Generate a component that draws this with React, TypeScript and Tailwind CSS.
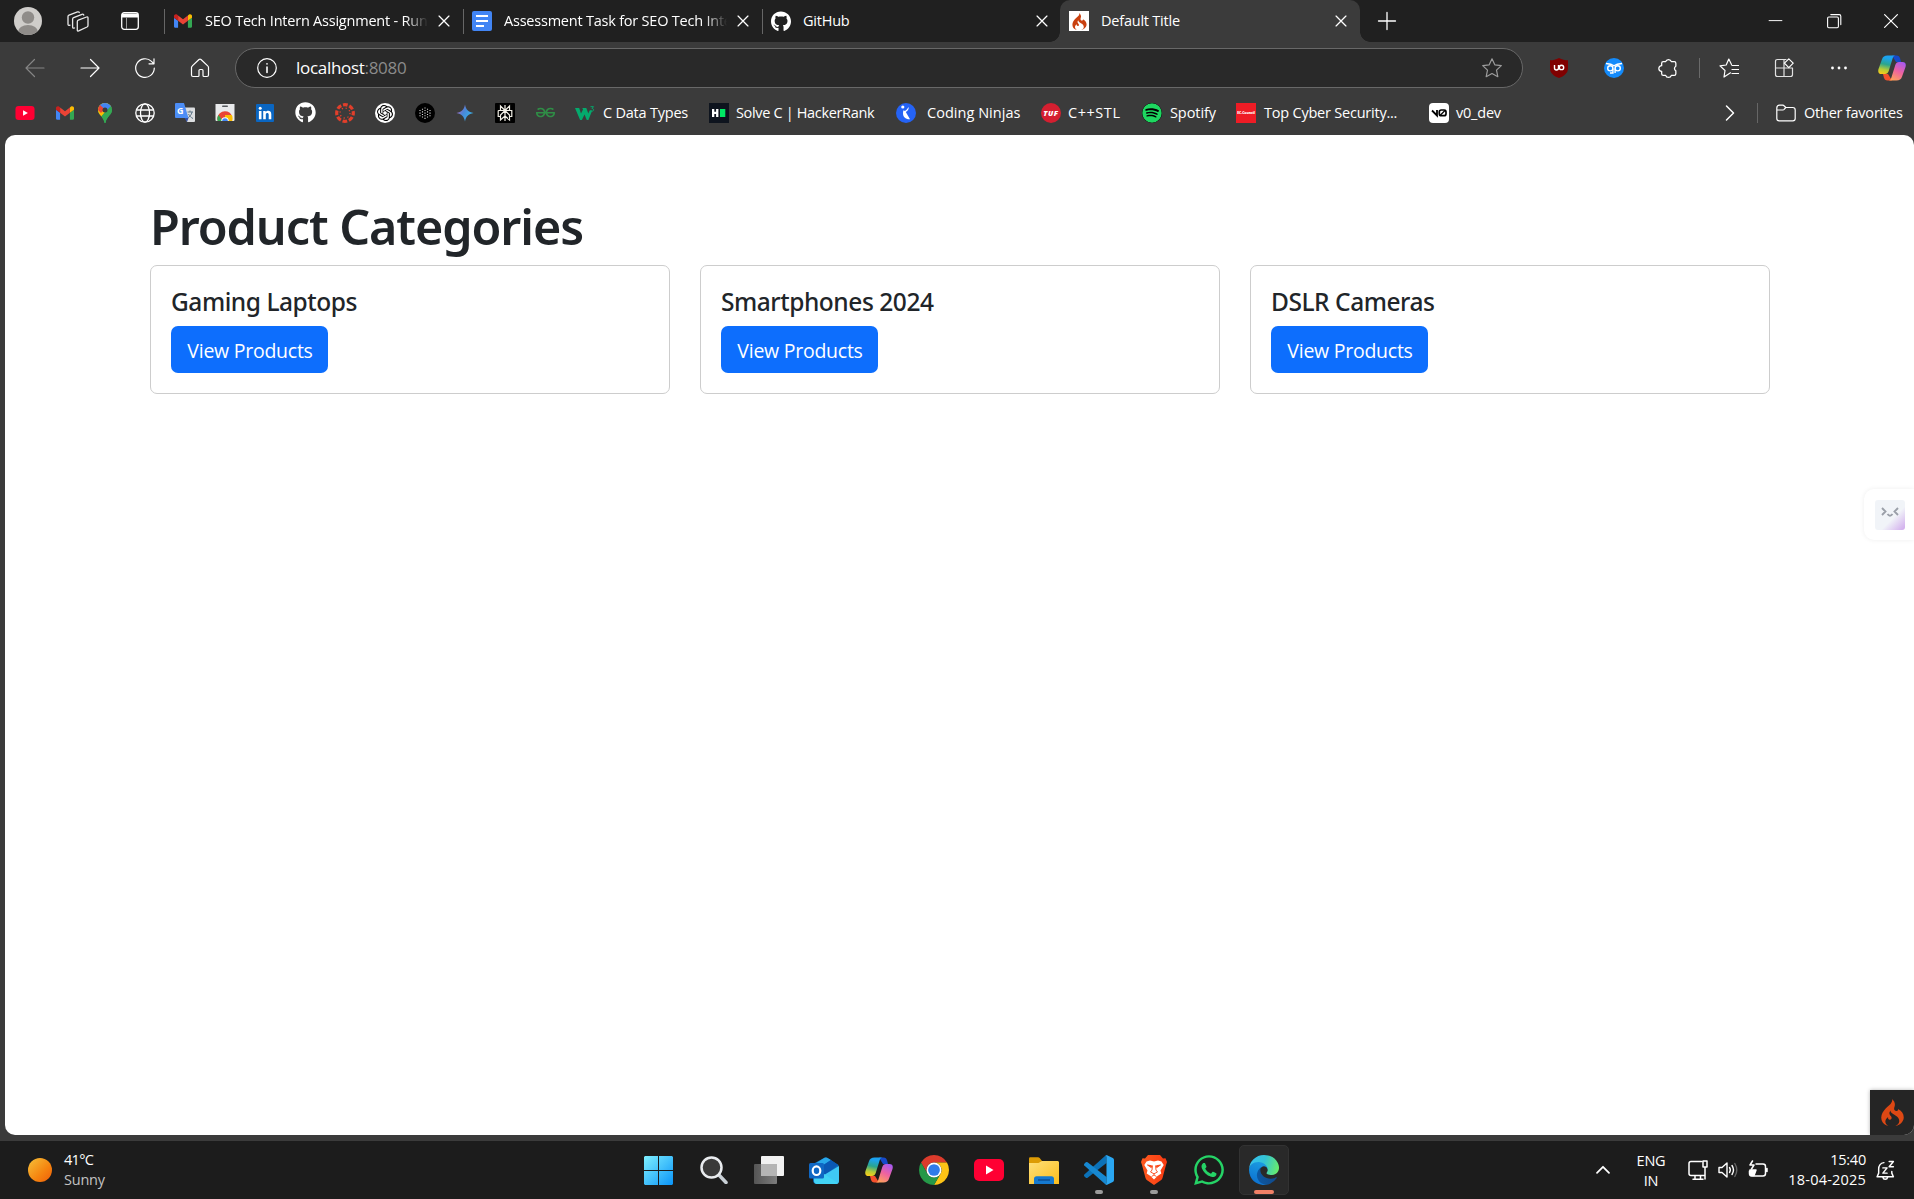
import React from 'react';
import { FaGithub, FaSpotify, FaWhatsapp } from 'react-icons/fa';
import { SiCodeigniter, SiGeeksforgeeks, SiOpenai } from 'react-icons/si';

type Kids = { children?: React.ReactNode };

/* ---------- brand icons ---------- */

const Gmail = () => (
  <svg viewBox="52 42 88 66" className="h-[14px] w-[18px]">
    <path fill="#4285f4" d="M58 108h14V74L52 59v43c0 3.32 2.69 6 6 6" />
    <path fill="#34a853" d="M120 108h14c3.32 0 6-2.69 6-6V59l-20 15" />
    <path fill="#fbbc04" d="M120 48v26l20-15v-8c0-7.42-8.47-11.65-14.4-7.2" />
    <path fill="#ea4335" d="M72 74V48l24 18 24-18v26L96 92" />
    <path fill="#c5221f" d="M52 51v8l20 15V48l-5.6-4.2c-5.94-4.45-14.4-.22-14.4 7.2" />
  </svg>
);

const YouTube = ({ className }: { className: string }) => (
  <svg viewBox="0 0 30 22" className={className}>
    <rect width="30" height="22" rx="5" fill="#ff0033" />
    <path d="M12 6.5v9l7.5-4.5z" fill="#fff" />
  </svg>
);

const Docs = () => (
  <svg viewBox="0 0 20 20" className="size-5">
    <rect width="20" height="20" rx="2" fill="#4285f4" />
    <path d="M4 5h12M4 10h12M4 15h8" stroke="#fff" strokeWidth="2.2" />
  </svg>
);

const MapsPin = () => (
  <svg viewBox="0 0 14 20" className="h-5 w-[14px]">
    <clipPath id="pin">
      <path d="M7 0a7 7 0 0 1 7 7c0 5-5.5 6.500-6.300 12.300a.7.7 0 0 1-1.400 0C5.500 13.500 0 12 0 7a7 7 0 0 1 7-7z" />
    </clipPath>
    <g clipPath="url(#pin)">
      <rect width="14" height="20" fill="#34a853" />
      <path d="M0 0h14v4L7 9 2 15l-2-2z" fill="#fbbc04" />
      <path d="M0 0h14v3L8 9 3 8z" fill="#4285f4" />
      <path d="M0 1.500 2 2l4.500 4L3 10 0 7z" fill="#ea4335" />
      <path d="M11 5 14 2v18H6.500L3 14z" fill="#34a853" />
    </g>
    <circle cx="7" cy="7" r="2.500" fill="#3b3b3b" />
  </svg>
);

const Globe = () => (
  <svg viewBox="0 0 20 20" className="size-5" fill="none" stroke="#fff" strokeWidth="1.300">
    <circle cx="10" cy="10" r="9.200" />
    <ellipse cx="10" cy="10" rx="4.500" ry="9.200" />
    <path d="M1.500 7h17M1.500 13h17" />
  </svg>
);

const Translate = () => (
  <svg viewBox="0 0 20 20" className="size-5">
    <path d="M8 4.500h11a1 1 0 0 1 1 1V18a1 1 0 0 1-1 1h-7z" fill="#dcdee0" />
    <path d="M12.500 9h5.500M15 7.500V9m2 0c-.5 3-2.500 5-4.500 6m1-4c1 2 2.500 3.500 4.500 4.500" stroke="#5f7688" fill="none" />
    <path d="M1 0h8l4.500 15H1a1 1 0 0 1-1-1V1a1 1 0 0 1 1-1z" fill="#4c8df6" />
    <path d="M9.500 15h4L12 19z" fill="#3350a8" />
    <text x="2" y="11" fontSize="9" fontWeight="700" fill="#fff" fontFamily="Open Sans, sans-serif">G</text>
  </svg>
);

const WebStore = () => (
  <svg viewBox="0 0 20 18" className="h-[18px] w-5">
    <path d="M.5 0h19v16a1 1 0 0 1-1 1h-17a1 1 0 0 1-1-1z" fill="#e9eaec" />
    <rect x="7" y="1.500" width="6" height="1.600" rx=".8" fill="#55585c" />
    <path d="M2.500 16.500a7.600 7.600 0 0 1 14-5.500H10v6z" fill="#ea4335" />
    <path d="M10 11h6.800c1 1.700 1 4 .4 6H10z" fill="#fbbc04" />
    <path d="M3.400 11 8 17H2.600c-.6-2-.3-4 .8-6z" fill="#34a853" />
    <path d="M6.200 17a3.800 3.800 0 0 1 7.600 0z" fill="#fff" />
    <path d="M7.200 17a2.800 2.800 0 0 1 5.600 0z" fill="#4285f4" />
  </svg>
);

const LinkedIn = () => (
  <svg viewBox="0 0 18 18" className="size-[18px]">
    <rect width="18" height="18" rx="1" fill="#0a66c2" />
    <circle cx="4.200" cy="4.300" r="1.500" fill="#fff" />
    <path d="M2.900 7h2.600v8.200H2.900zM7.200 7h2.500v1.200c1.300-2.200 5.600-2 5.600 2v5h-2.600v-4.600c0-2-2.900-2-2.900 0v4.600H7.200z" fill="#fff" />
  </svg>
);

const SunRing = () => (
  <svg viewBox="0 0 20 20" className="size-5" fill="none" stroke="#e13f2b">
    <circle cx="10" cy="10" r="8.300" strokeWidth="3.200" strokeDasharray="4.700 1.820" strokeDashoffset="2.300" />
    <circle cx="10" cy="10" r="5" strokeWidth="1.300" strokeDasharray="1.300 2.630" />
  </svg>
);

const DotSphere = () => (
  <svg viewBox="0 0 20 20" className="size-5">
    <circle cx="10" cy="10" r="10" fill="#000" />
    <path
      d="M5 7v6.500M7.500 5.700v9M10 4.400v11.500M12.500 5.700v9M15 7v6.500"
      stroke="#d8d8d8" strokeWidth="1.100" strokeDasharray="1.100 1.500"
    />
  </svg>
);

const Gemini = () => (
  <svg viewBox="0 0 20 20" className="size-5">
    <linearGradient id="gem" x1="0" y1="0" x2="1" y2=".6">
      <stop offset=".2" stopColor="#a06cc0" />
      <stop offset=".5" stopColor="#4a86d8" />
      <stop offset="1" stopColor="#36b5e8" />
    </linearGradient>
    <path d="M10 1.500c.8 5 3.500 7.700 8.500 8.500-5 .8-7.700 3.500-8.500 8.500-.8-5-3.500-7.700-8.500-8.500 5-.8 7.700-3.500 8.500-8.500z" fill="url(#gem)" />
  </svg>
);

const Perplexity = () => (
  <svg viewBox="0 0 20 20" className="size-5">
    <rect width="20" height="20" rx="1" fill="#000" />
    <path
      d="M10 2v16M10 7.500 5.500 3v4.500M10 7.500 14.500 3v4.500M3.200 7.500h13.600v6H14.500V17L10 13M5.500 13.500H3.200v-6M5.500 13.500V17L10 13M10 7.500l-4.500 4.500v1.500M10 7.500l4.500 4.500v1.500"
      fill="none" stroke="#f2efe6" strokeWidth="1.200"
    />
  </svg>
);

const W3 = () => (
  <svg viewBox="0 0 20 14" className="h-[14px] w-5">
    <path d="M0 2h4.200l1.800 5.500L8 3.500 7.300 2h4l2 5.500 1.300-3h2.600L13.400 14h-1.600L9.500 8.500 6.900 14H5.100z" fill="#04aa6d" />
    <path d="M15.500.7h3L17 2.500c2.300 0 2 3-.2 2.600-.6 0-1-.3-1.400-.6" fill="none" stroke="#04aa6d" strokeWidth="1" />
  </svg>
);

const HackerRank = () => (
  <svg viewBox="0 0 20 20" className="size-5">
    <rect width="20" height="20" fill="#0e141e" />
    <path d="M3 6h2.300v2.700h1.800V6h2.300v8H7.100v-3H5.300v3H3z" fill="#fff" />
    <rect x="11" y="6" width="5.300" height="8" fill="#00ea64" />
  </svg>
);

const Ninjas = () => (
  <svg viewBox="0 0 20 20" className="size-5">
    <circle cx="10" cy="10" r="10" fill="#2563f5" />
    <circle cx="6.800" cy="4" r="1.600" fill="#fff" />
    <path d="M12.600 4c.4 2.200-.6 3.600-2.800 5L14 16.300c-4.500.2-7-2.300-7-6 0-1 .1-2 .5-3l1.500.8c1.200-.9 2.400-2.100 3.600-4.100z" fill="#fff" />
  </svg>
);

const Tuf = () => (
  <span className="flex size-5 items-center justify-center rounded-full bg-[#d41f30] text-[7.500px] font-extrabold italic text-white">TUF</span>
);

const EcCouncil = () => (
  <span className="flex size-5 items-center justify-center overflow-hidden bg-[#ee1c25] text-[3.500px] font-extrabold tracking-[-0.1px] text-white">EC-Council</span>
);

const V0 = () => (
  <svg viewBox="0 0 20 20" className="size-5">
    <rect width="20" height="20" rx="4" fill="#fff" />
    <path d="M3 7.500 8 12.500V7" fill="none" stroke="#000" strokeWidth="1.800" />
    <rect x="10.300" y="7" width="6.700" height="5.700" rx="2" fill="none" stroke="#000" strokeWidth="1.700" />
    <path d="m11 12.500 5.500-5.500" stroke="#000" strokeWidth="1.300" />
  </svg>
);

const Ublock = () => (
  <svg viewBox="0 0 20 20" className="size-5">
    <path d="M10 0c3 1.800 6 2.300 9 2.300v8c0 5-4 8-9 9.700-5-1.700-9-4.700-9-9.700v-8C4 2.300 7 1.800 10 0z" fill="#800000" />
    <path d="M5.500 7v3a2 2 0 0 0 4 0V7" fill="none" stroke="#fff" strokeWidth="1.400" />
    <circle cx="12.500" cy="9.400" r="2.200" fill="none" stroke="#fff" strokeWidth="1.400" />
  </svg>
);

const Owl = () => (
  <svg viewBox="0 0 20 20" className="size-5">
    <circle cx="10" cy="10" r="10" fill="#148bfb" />
    <g fill="none" stroke="#fff" strokeWidth="1.400">
      <circle cx="6.300" cy="10.300" r="2.600" />
      <circle cx="13.700" cy="10.300" r="2.600" />
      <path d="M2 5.500c3 .2 6 .8 8 2.300 2-1.500 5-2.100 8-2.300M8.900 10.500V15H6M11.100 10.500V15" />
    </g>
  </svg>
);

const Copilot = ({ id, className }: { id: string; className: string }) => (
  <svg viewBox="0 0 28 26" className={className}>
    <linearGradient id={`${id}l`} x1=".4" y1="0" x2=".2" y2="1">
      <stop offset=".1" stopColor="#1ca3f0" />
      <stop offset=".45" stopColor="#2aa58e" />
      <stop offset=".75" stopColor="#b7cc36" />
      <stop offset="1" stopColor="#fbcb18" />
    </linearGradient>
    <linearGradient id={`${id}r`} x1=".8" y1="0" x2=".3" y2="1">
      <stop offset="0" stopColor="#a659f2" />
      <stop offset=".5" stopColor="#ee62a0" />
      <stop offset="1" stopColor="#fda05c" />
    </linearGradient>
    <path d="M14 .5h4.600c2 0 2.900 1 3.500 3L23 7h-5z" fill="#1649c9" />
    <path d="M14 25.500H9.400c-2 0-2.900-1-3.500-3L5 19h5z" fill="#f4502c" />
    <path d="M9.500.5h8c-1.600 0-2.300 1.200-2.900 3L10.700 16c-.7 2-1.700 3-3.700 3H3.600C.6 19-.3 17 .5 14L4 4.200C4.900 1.700 6.500.5 9.500.5z" fill={`url(#${id}l)`} />
    <path d="M18.500 25.500h-8c1.600 0 2.300-1.200 2.900-3L17.300 10c.7-2 1.700-3 3.700-3h3.400c3 0 3.900 2 3.100 5L24 21.800c-.9 2.500-2.500 3.700-5.500 3.700z" fill={`url(#${id}r)`} />
  </svg>
);

/* ---------- line icons ---------- */

const Line = ({ children, className = 'size-5', w = 1.2 }: Kids & { className?: string; w?: number }) => (
  <svg viewBox="0 0 20 20" className={className} fill="none" stroke="currentColor" strokeWidth={w} strokeLinecap="round" strokeLinejoin="round">
    {children}
  </svg>
);

const Close = () => (
  <Line className="size-[18px] shrink-0" w={1.400}><path d="m4.500 4.500 11 11m0-11-11 11" /></Line>
);

const Star = () => (
  <Line><path d="m10 .8 2.800 6 6.500.8-4.800 4.500 1.300 6.600L10 15.500l-5.800 3.200 1.300-6.600L.7 7.600l6.500-.8z" /></Line>
);

/* ---------- tabs ---------- */

const Tab = ({ icon, title, fade, active }: { icon: React.ReactNode; title: string; fade?: boolean; active?: boolean }) => (
  <div className={active
    ? 'relative -ml-px flex w-[300px] items-center rounded-t-[10px] bg-[#3b3b3b] pl-[9px] pr-[10px]'
    : 'flex w-[299px] items-center pr-[10px]'}>
    {active && (
      <>
        <span className="absolute -left-2.5 bottom-0 size-2.5 bg-[radial-gradient(circle_at_0_0,transparent_9.500px,#3b3b3b_10px)]" />
        <span className="absolute -right-2.5 bottom-0 size-2.5 bg-[radial-gradient(circle_at_100%_0,transparent_9.500px,#3b3b3b_10px)]" />
      </>
    )}
    {!active && <span className="h-[25px] w-px bg-[#666]" />}
    <span className={active ? 'flex w-5 justify-center' : 'ml-2 flex w-5 justify-center'}>{icon}</span>
    <span className={fade
      ? 'ml-3 w-[223px] overflow-hidden whitespace-nowrap [mask-image:linear-gradient(90deg,#000_90%,transparent)]'
      : 'ml-3 w-[223px] overflow-hidden whitespace-nowrap'}>{title}</span>
    <span className="ml-auto"><Close /></span>
  </div>
);

const TabStrip = () => (
  <div className="flex h-[42px] bg-[#202020]">
    <div className="flex w-[164px] items-center">
      <svg viewBox="0 0 28 28" className="ml-3.5 size-7">
        <clipPath id="av"><circle cx="14" cy="14" r="14" /></clipPath>
        <g clipPath="url(#av)">
          <rect width="28" height="28" fill="#cfcdca" />
          <circle cx="14" cy="10.500" r="6.200" fill="#8f8c89" />
          <ellipse cx="14" cy="25" rx="10" ry="7" fill="#8f8c89" />
        </g>
      </svg>
      <svg viewBox="0 0 22 21" className="ml-[25px] h-[21px] w-[22px]" fill="none" stroke="#e8e8e8" strokeWidth="1.300" strokeLinejoin="round" strokeLinecap="round">
        <path d="M11.300 9.200 19.600 6q1.400-.4 1.400 1v7.500q0 1-1 1.500l-8.300 3.900q-1.400.5-1.400-1v-8.200q0-1.100 1-1.500z" />
        <path d="M7.500 17q-1.900.6-1.900-1V8.200q0-1.100 1-1.500L15 3.300q1.500-.5 1.800.8" />
        <path d="M3 14.200Q1 14.800 1 13.200V5.600q0-1.100 1-1.500L10.500.9q1.500-.4 1.800.6" />
      </svg>
      <svg viewBox="0 0 18 18" className="ml-8 size-[18px]">
        <rect x=".7" y=".7" width="16.600" height="16.600" rx="2.500" fill="none" stroke="#fff" strokeWidth="1.300" />
        <path d="M1 1.500h16V5.500H1z" fill="#fff" />
        <path d="M5.500 5v12" stroke="#999" strokeWidth="1" />
      </svg>
    </div>
    <Tab icon={<Gmail />} title="SEO Tech Intern Assignment - Runtime" fade />
    <Tab icon={<Docs />} title="Assessment Task for SEO Tech Intern" fade />
    <Tab icon={<FaGithub className="size-[21px] text-white" />} title="GitHub" />
    <Tab
      active
      icon={<span className="flex size-5 items-center justify-center bg-white"><SiCodeigniter className="size-[17px] text-[#c9400f]" /></span>}
      title="Default Title"
    />
    <div className="flex w-[54px] items-center justify-center"><Line w={1.300}><path d="M10 1.500v17M1.500 10h17" /></Line></div>
    <div className="ml-auto flex w-[175px] items-center justify-between pl-7 pr-[15px]">
      <Line className="h-4 w-[17px]"><path d="M2 9.500h16" /></Line>
      <Line className="size-4" w={1.400}><rect x="2" y="5" width="13.500" height="13.500" rx="1.500" /><path d="M6 2h10.500a2 2 0 0 1 2 2v10.500" /></Line>
      <Line className="size-4" w={1.500}><path d="m2 2 16 16M18 2 2 18" /></Line>
    </div>
  </div>
);

/* ---------- toolbar ---------- */

const Slot = ({ children }: Kids) => <span className="flex w-[55px] shrink-0 items-center justify-center">{children}</span>;

const Toolbar = () => (
  <div className="flex h-[52px] items-center pl-[7px]">
    <Slot><span className="text-[#858585]"><Line><path d="M19 10H1m8.500-8.500L1 10l8.500 8.500" /></Line></span></Slot>
    <Slot><Line><path d="M1 10h18m-8.500-8.500L19 10l-8.500 8.500" /></Line></Slot>
    <Slot><Line><path d="M19.300 10a9.300 9.300 0 1 1-2.800-6.600l2 2M19 .8v5h-5" /></Line></Slot>
    <Slot><Line><path d="M1.500 9.500q0-1 .8-1.600L9 1.500q1-.9 2 0l6.700 6.400q.8.700.8 1.600V17q0 1.500-1.500 1.500h-3q-1 0-1-1v-5q0-1-1-1h-2q-1 0-1 1v5q0 1-1 1H3q-1.500 0-1.500-1.500z" /></Line></Slot>
    <div className="ml-2 flex h-10 w-[1288px] items-center rounded-full border border-[#686868] bg-[#292929] pl-[21px] pr-5">
      <Line><circle cx="10" cy="10" r="9.300" /><path d="M10 9v5.500M10 5.800v.1" strokeWidth="1.600" /></Line>
      <span className="ml-[19px] text-[17px] tracking-[-0.3px] text-white">localhost<span className="text-[#8b8b8b]">:8080</span></span>
      <span className="ml-auto text-[#9c9c9c]"><Star /></span>
    </div>
    <span className="ml-2 flex">
      <Slot><Ublock /></Slot>
      <Slot><Owl /></Slot>
      <Slot>
        <Line className="size-[21px]"><path d="M5 3.500h2.300a2.800 2.800 0 0 1 5.400 0H15.500q1.500 0 1.500 1.500v2.800a2.500 2.500 0 0 0 0 4.400V15q0 1.500-1.500 1.500h-2.800a2.800 2.800 0 0 1-5.400 0H5Q3.500 16.500 3.500 15v-2.300a2.700 2.700 0 0 1 0-5.400V5q0-1.500 1.500-1.500" /></Line>
      </Slot>
    </span>
    <span className="ml-[3px] mr-px h-5 w-px bg-[#6a6a6a]" />
    <Slot><Line><path d="M11.500 14.800 5 19l1-6.500-5-4.600L7.200 7 9.800 1l2.700 5.500M13 7.500h6.500M13 11.500h6.500M13 15.500h6.500" /></Line></Slot>
    <Slot><Line><path d="M12 1.500H3.500q-2 0-2 2v13q0 2 2 2h13q2 0 2-2V10h-17M10 1.500v17" strokeOpacity=".85" /><path fill="#3b3b3b" d="m14.800.8 4.400 4.400-4.400 4.400-4.400-4.400z" /></Line></Slot>
    <Slot><svg viewBox="0 0 20 20" className="size-5" fill="#fff"><circle cx="3.500" cy="10" r="1.400" /><circle cx="10" cy="10" r="1.400" /><circle cx="16.500" cy="10" r="1.400" /></svg></Slot>
    <span className="ml-3 flex"><Copilot id="tb" className="h-[26px] w-7" /></span>
  </div>
);

/* ---------- favourites bar ---------- */

const iconLinks = [
  <YouTube className="h-[14px] w-5" />, <Gmail />, <MapsPin />, <Globe />, <Translate />, <WebStore />, <LinkedIn />,
  <FaGithub className="size-[21px]" />, <SunRing />,
  <span className="flex size-5 items-center justify-center rounded-full bg-white"><SiOpenai className="size-4 text-black" /></span>,
  <DotSphere />, <Gemini />, <Perplexity />, <SiGeeksforgeeks className="size-[19px] text-[#2f8d46]" />,
];

const Favorite = ({ icon, label, className }: { icon: React.ReactNode; label: string; className: string }) => (
  <span className={className}>
    <span className="mr-2 flex">{icon}</span>
    <span className="pt-px">{label}</span>
  </span>
);

const Favorites = () => (
  <div className="flex h-[41px] items-center whitespace-nowrap pb-1 pl-[5px]">
    {iconLinks.map((icon, i) => <span key={i} className="flex w-10 shrink-0 justify-center">{icon}</span>)}
    <Favorite className="ml-2.5 flex w-[134px] items-center" icon={<W3 />} label="C Data Types" />
    <Favorite className="flex w-[187px] items-center tracking-[-0.34px]" icon={<span className="-mr-px"><HackerRank /></span>} label="Solve C | HackerRank" />
    <Favorite className="flex w-[145px] items-center tracking-[0.03px]" icon={<span className="mr-[3px]"><Ninjas /></span>} label="Coding Ninjas" />
    <Favorite className="flex w-[101px] items-center tracking-[0.55px]" icon={<span className="-mr-px"><Tuf /></span>} label="C++STL" />
    <Favorite className="flex w-[94px] items-center tracking-[-0.08px]" icon={<FaSpotify className="size-5 rounded-full bg-black text-[#1ed760]" />} label="Spotify" />
    <Favorite className="flex w-[193px] items-center" icon={<EcCouncil />} label="Top Cyber Security..." />
    <Favorite className="flex items-center" icon={<span className="-mr-px"><V0 /></span>} label="v0_dev" />
    <span className="ml-auto flex w-[185px] items-center">
      <Line className="-ml-[9px] size-5" w={1.500}><path d="m6.500 3 7 7-7 7" /></Line>
      <span className="ml-[17px] h-5 w-px bg-[#666]" />
      <span className="ml-[18px] mr-2">
        <Line><path d="M.8 5q0-2.800 2.800-2.800h3q1 0 1.700.8l1.500 1.500h7q2.400 0 2.400 2.400v8.500q0 2.400-2.400 2.400H3.200Q.8 17.800.8 15.400zM.8 7h6q1 0 1.500-.8l1.500-1.700" /></Line>
      </span>
      <span className="pt-px">Other favorites</span>
    </span>
  </div>
);

/* ---------- page ---------- */

const Page = () => (
  <div className="relative ml-[5px] h-[1000px] overflow-hidden rounded-[10px] bg-white font-['Noto_Sans','Open_Sans',sans-serif] text-[#212529]">
    <main className="mx-[145px] w-[1620px] pt-[61px]">
      <h1 className="mb-[9px] text-[48.500px] font-semibold leading-[60px] tracking-[-1.080px]">Product Categories</h1>
      <div className="grid grid-cols-3 gap-[30px]">
        {['Gaming Laptops', 'Smartphones 2024', 'DSLR Cameras'].map((name) => (
          <section key={name} className="rounded-[7px] border border-[#cdcdcd] p-5 pt-[21px]">
            <h5 className="mb-[9px] text-[24.500px] font-medium leading-[30px] tracking-[-0.45px]">{name}</h5>
            <button className="block h-[47px] w-[157px] rounded-[7px] bg-[#0d6efd] pl-px pt-0.5 font-['Open_Sans',sans-serif] text-[19.500px] tracking-[-0.25px] text-white">View Products</button>
          </section>
        ))}
      </div>
    </main>
    <div className="absolute right-0 top-[354px] flex h-[51px] w-[50px] items-center rounded-l-[10px] bg-white pl-[11px] shadow-[0_0_5px_rgba(0,0,0,0.070)]">
      <span className="flex size-[30px] rounded-[3px] bg-[linear-gradient(135deg,#f1f4f8_60%,#cfa8ec)]">
        <svg viewBox="0 0 30 30" className="size-[30px]" fill="none" stroke="#9a9fa8" strokeWidth="1.900">
          <path d="m7 8 3.500 3.500L7 15M23 8l-3.500 3.500L23 15M12.500 14q2.500 3.500 5 0" />
        </svg>
      </span>
    </div>
    <div className="absolute bottom-0 right-0 flex h-[45px] w-11 items-center justify-center bg-[#252525] shadow-[0_0_4px_rgba(0,0,0,0.300)]">
      <SiCodeigniter className="size-[27px] text-[#dd4814]" />
    </div>
  </div>
);

/* ---------- taskbar ---------- */

const Win = () => (
  <svg viewBox="0 0 29 29" className="size-[29px]">
    <linearGradient id="win" gradientUnits="userSpaceOnUse" x1="0" y1="0" x2="29" y2="29"><stop stopColor="#7ff0ff" /><stop offset="1" stopColor="#0a94f8" /></linearGradient>
    <path fill="url(#win)" d="M1 0h13v14H0V1zM15 0h13l1 1v13H15zM0 15h14v14H1l-1-1zM15 15h14v13l-1 1H15z" />
  </svg>
);

const Search = () => (
  <svg viewBox="0 0 28 28" className="size-7" fill="none">
    <path d="m18.500 18.500 7.500 8" stroke="#c9d0d6" strokeWidth="3.500" strokeLinecap="round" />
    <circle cx="11.500" cy="11.500" r="10" fill="#3a3a3a" stroke="#e9ecef" strokeWidth="2.500" />
  </svg>
);

const TaskView = () => (
  <svg viewBox="0 0 30 28" className="h-7 w-[30px]">
    <linearGradient id="tv"><stop stopColor="#555" /><stop offset="1" stopColor="#7d7d7d" /></linearGradient>
    <rect y="8" width="23" height="20" rx="1" fill="url(#tv)" />
    <rect x="7" width="23" height="20" rx="1" fill="#f2f2f2" />
    <path d="M7 8h16v12H7z" fill="#b5b5b5" />
  </svg>
);

const Outlook = () => (
  <svg viewBox="0 0 30 27" className="h-[27px] w-[30px]">
    <path d="M4 7 15.500.8q1.300-.7 2.600 0L29.500 8v16q0 3-3 3H8q-4 0-4-4z" fill="#0f6cbd" />
    <path d="M4 8 15.500.8q1.300-.7 2.600 0L22 3 8 13z" fill="#28a8ea" />
    <path d="m8 12 14-9 7 5-13 10z" fill="#0a58b5" />
    <path d="m15 18 15-9v15q0 3-3 3H7z" fill="#3fc8f4" />
    <path d="M5 17h10l14 9q-1 1-3 1H8q-3 0-3-3z" fill="#42d3f5" />
    <rect y="6" width="15" height="15.500" rx="1.500" fill="#1068c4" />
    <ellipse cx="7.500" cy="13.700" rx="3.800" ry="4.300" fill="none" stroke="#fff" strokeWidth="2.200" />
  </svg>
);

const Chrome = () => (
  <svg viewBox="2 2 44 44" className="size-[30px]">
    <path fill="#dc3b2c" d="M24 13h19.050A22 22 0 0 0 4.950 13l9.520 16.500A11 11 0 0 1 24 13z" />
    <path fill="#fdc316" d="M43.050 13A22 22 0 0 1 24 46l9.530-16.500A11 11 0 0 0 24 13z" />
    <path fill="#259848" d="M24 46A22 22 0 0 1 4.950 13l9.520 16.500a11 11 0 0 0 19.060 0z" />
    <circle cx="24" cy="24" r="11" fill="#fff" />
    <circle cx="24" cy="24" r="8.600" fill="#2f7bea" />
  </svg>
);

const Folder = () => (
  <svg viewBox="0 0 30 27" className="h-[27px] w-[30px]">
    <linearGradient id="fo" x2="1" y2="1"><stop stopColor="#ffe07a" /><stop offset="1" stopColor="#fbbd1c" /></linearGradient>
    <path d="M0 1.500Q0 .3 1.200.3H9q1 0 1.700.7L13 4v6H0z" fill="#dd9c05" />
    <path d="M0 6h9.500L13 4h16l1 1v22H0z" fill="url(#fo)" />
    <path d="M5 27v-5q0-2.700 2.700-2.700h14.600Q25 19.300 25 22v5z" fill="#1579d0" />
    <path d="M9 23h12" stroke="#0c4f94" strokeWidth="1.500" />
  </svg>
);

const VsCode = () => (
  <svg viewBox="0 0 100 100" className="size-[30px]">
    <path d="M75 1v26L12 76q-3 2-6 0l-5-5q-2-3 0-6L70 3z" fill="#0c72b8" />
    <path d="M75 99V73L12 24q-3-2-6 0l-5 5q-2 3 0 6l69 62z" fill="#1788d1" />
    <path d="M71 99q4-1 4-7V8q0-5-4-7 3-1 6 0l19 9q4 2 4 7v66q0 5-4 7l-19 9q-3 1-6 0z" fill="#2aa7f2" />
  </svg>
);

const Edge = () => (
  <svg viewBox="0 0 256 256" className="size-[30px]">
    <linearGradient id="e1" x1="0" x2="1"><stop stopColor="#0c59a4" /><stop offset="1" stopColor="#114a8b" /></linearGradient>
    <linearGradient id="e2" x1=".6" y1="0" x2=".3" y2="1"><stop stopColor="#1b9de2" /><stop offset="1" stopColor="#0c6fcf" /></linearGradient>
    <linearGradient id="e3" x1="0" y1=".3" x2="1" y2=".5"><stop stopColor="#35c1f1" /><stop offset=".5" stopColor="#34c3d4" /><stop offset="1" stopColor="#66eb6e" /></linearGradient>
    <path fill="url(#e1)" d="M230.600 190.600c-3.400 1.800-6.900 3.400-10.500 4.700a101.600 101.600 0 0 1-35.700 6.400c-47 0-88-32.300-88-73.800a31.300 31.300 0 0 1 16.300-27.200c-42.500 1.800-53.400 46.100-53.400 72.100 0 73.500 67.700 81 82.300 81 7.900 0 19.800-2.300 27-4.600l1.300-.4a128.300 128.300 0 0 0 66.600-52.800 4 4 0 0 0-5.900-5.400z" />
    <path fill="url(#e2)" d="M105.700 241.400a79.200 79.200 0 0 1-22.700-21.300 80.700 80.700 0 0 1 29.500-120c3.200-1.500 8.500-4.100 15.600-4a32.400 32.400 0 0 1 25.700 13 31.900 31.900 0 0 1 6.300 18.700c0-.2 24.500-79.600-80-79.600-43.900 0-80 41.700-80 78.200a130.200 130.200 0 0 0 12.100 56 128 128 0 0 0 156.400 67 75.500 75.500 0 0 1-62.800-8z" />
    <path fill="url(#e3)" d="M152.300 148.900c-.8 1-3.300 2.500-3.300 5.700 0 2.600 1.700 5.200 4.800 7.300 14.400 10 41.500 8.700 41.600 8.700a59.600 59.600 0 0 0 30.300-8.400 61.400 61.400 0 0 0 30.400-52.900c.3-22.400-8-37.300-11.300-43.900C223.500 23.900 177.700 0 128 0A128 128 0 0 0 0 126.200c.5-36.500 36.800-66 80-66 3.500 0 23.500.3 42 10.100 16.300 8.600 24.900 18.900 30.800 29.200 6.200 10.700 7.300 24.100 7.300 29.500 0 5.300-2.700 13.300-7.800 19.900z" />
  </svg>
);

const Brave = () => (
  <svg viewBox="0 0 26 30" className="h-[30px] w-[26px]">
    <linearGradient id="br"><stop stopColor="#ff5a1f" /><stop offset="1" stopColor="#f93a12" /></linearGradient>
    <path d="M7 0h12l3 3.500 2.500-.3L26 7l-1 3-3.500 13q-.5 1.500-2 2.500L13 30l-6.500-4.500q-1.500-1-2-2.500L1 10 0 7l1.500-3.800 2.500.3z" fill="url(#br)" />
    <path d="M5.500 6.500 9 5.500l4 1 4-1 3.500 1 2.200 3.500-3.200 5.500.8 3-3.800 2.500L13 24.500 9.500 21l-3.800-2.500.8-3L3.300 10z" fill="#fff" />
    <path d="m6.500 10 4.200.8-.4 1.800zM19.500 10l-4.200.8.4 1.800z" stroke="#fb4a1a" strokeWidth="1" fill="#fb4a1a" />
    <path d="M11.500 10.500 11 15l-1.500 2 3.500 1.800 3.500-1.800L15 15l-.5-4.500M13 18.800V20l-2.500 1.500M13 20l2.500 1.500" stroke="#fb4a1a" strokeWidth=".9" fill="none" />
  </svg>
);

const apps: { icon: React.ReactNode; state?: 'open' | 'active' }[] = [
  { icon: <Win /> }, { icon: <Search /> }, { icon: <TaskView /> }, { icon: <Outlook /> },
  { icon: <Copilot id="tk" className="h-[26px] w-7" /> }, { icon: <Chrome /> },
  { icon: <YouTube className="h-[22px] w-[30px]" /> }, { icon: <Folder /> },
  { icon: <VsCode />, state: 'open' }, { icon: <Brave />, state: 'open' },
  { icon: <FaWhatsapp className="size-[34px] text-[#25d366]" /> }, { icon: <Edge />, state: 'active' },
];

const Taskbar = () => (
  <div className="flex h-[58px] items-center bg-[#1c1c1c] leading-5">
    <div className="flex w-[631px] items-center pl-7">
      <span className="size-6 rounded-full bg-[linear-gradient(135deg,#f6c13a,#f5840f_60%,#ee5d0a)]" />
      <div className="ml-3">
        <div className="tracking-[-0.7px]">41°C</div>
        <div className="text-[#c2c2c2]">Sunny</div>
      </div>
    </div>
    <div className="flex">
      {apps.map(({ icon, state }, i) => (
        <div key={i} className="flex w-[55px] justify-center">
          <div className={state === 'active'
            ? 'relative flex size-[50px] items-center justify-center rounded-[5px] border border-[#323232] bg-[#292929]'
            : 'relative flex size-[50px] items-center justify-center'}>
            {icon}
            {state === 'open' && <span className="absolute bottom-[1px] h-1 w-2 rounded-full bg-[#9b9b9b]" />}
            {state === 'active' && <span className="absolute bottom-0 h-1 w-5 rounded-full bg-[#f08066]" />}
          </div>
        </div>
      ))}
    </div>
    <div className="ml-auto flex items-center pr-[18px]">
      <Line className="size-4" w={2.200}><path d="m2.500 13.500 7.500-7.500 7.500 7.500" /></Line>
      <div className="ml-[25px] w-[30px] pt-0.5 text-center"><div>ENG</div><div>IN</div></div>
      <span className="ml-[22px] flex items-center gap-2.5">
        <Line w={1.500}><path d="M13.500 1.500H3q-2 0-2 2v10q0 2 2 2h14V9M5 19.200h10M7 15.500v3.700M12.500 15.500v3.700M15 1h4v6h-4zM17 7v12" /></Line>
        <Line w={1.400}><path d="M1 7.500h3L9 3v14l-5-4.500H1zM11.500 7.500q1.700 2.500 0 5M14 5.500q3 4.500 0 9" /><path d="M16.800 3.500q4 6.500 0 13" stroke="#666" /></Line>
        <Line w={1.500}><path d="M8 4h7q2.500 0 2.500 2.500v7q0 2.500-2.500 2.500H4q-2.500 0-2.500-2.500V11M19 8.500v3" /><path d="M2 10h6l-2 5.500H3z" fill="#fff" /><path d="M4.500 1 2 5h4L3.500 9" /></Line>
      </span>
      <div className="ml-4 w-[82px] text-right tracking-[0.2px]"><div className="tracking-[-0.22px]">15:40</div><div>18-04-2025</div></div>
      <Line className="ml-[9px] size-[21px]" w={1.400}>
        <path d="M8.500 2.500C5 3 3.500 6 3.500 8.500v4L2 16h15.500l-1.500-3.500V11M7.500 16.500c.5 2.500 4 2.500 4.500 0M7.500 7.500h4L7.500 12.500h4M13.500 1.500h4l-4 5h4" />
      </Line>
    </div>
  </div>
);

export default function App() {
  return (
    <div className="h-[1199px] w-[1914px] overflow-hidden bg-[#3b3b3b] font-['Open_Sans',sans-serif] text-[14.500px] leading-5 tracking-[-0.22px] text-white">
      <TabStrip />
      <Toolbar />
      <Favorites />
      <Page />
      <div className="h-1.5" />
      <Taskbar />
    </div>
  );
}
